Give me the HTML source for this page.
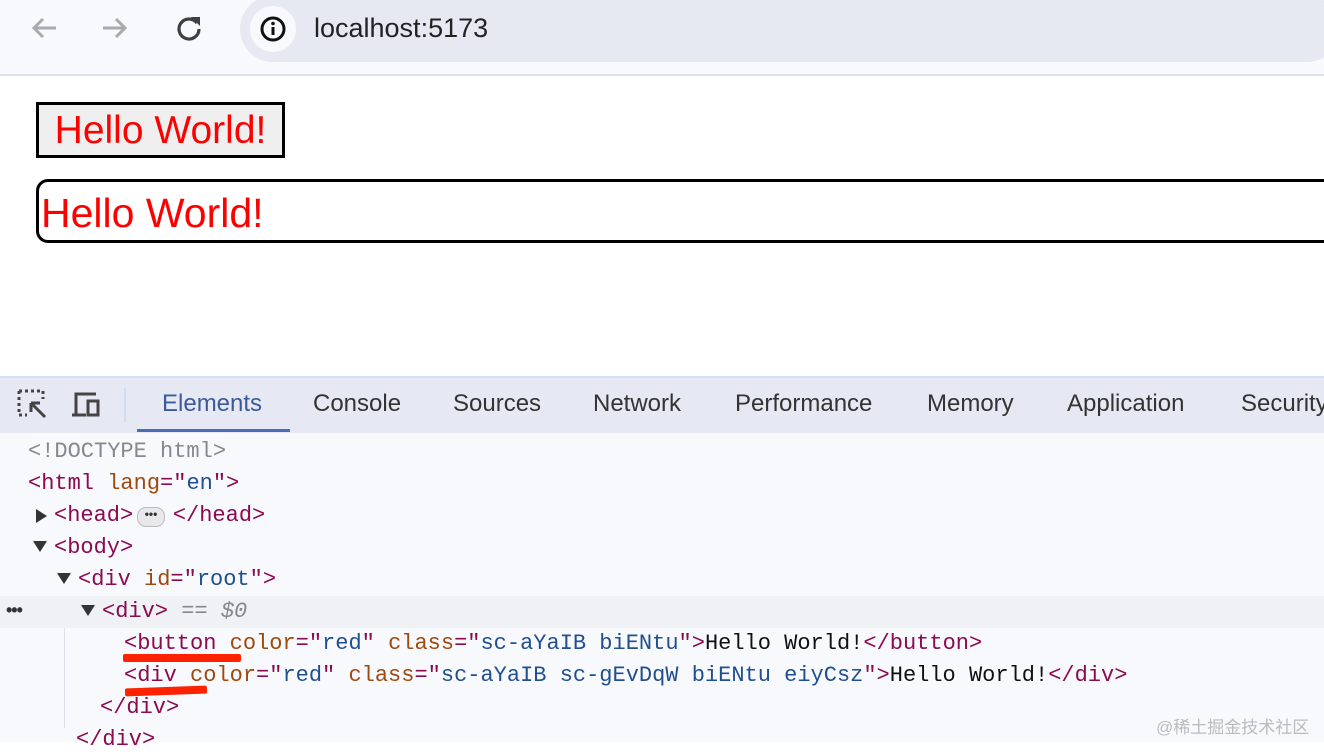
<!DOCTYPE html>
<html><head><style>
body{margin:0;width:1324px;height:742px;overflow:hidden;background:#fff;font-family:"Liberation Sans",sans-serif;position:relative}
.abs{position:absolute}
.top{left:0;top:0;width:1324px;height:74px;background:#f8f9fd;border-bottom:2px solid #dfe1e8}
.url{left:240px;top:-4px;width:1100px;height:66px;background:#e6e9f2;border-radius:33px}
.ic{left:250px;top:6px;width:46px;height:46px;background:#f8f9fd;border-radius:50%}
.urltext{left:314px;top:13px;font-size:27px;color:#222}
.btn1{left:36px;top:102px;width:243px;height:50px;border:3px solid #000;background:#efefef;color:red;font-size:39px;line-height:52px;text-align:center;box-sizing:content-box;white-space:nowrap}
.div2{left:36px;top:179px;width:1320px;height:58px;border:3px solid #000;border-radius:12px;color:red;font-size:41px;line-height:62px;padding-left:2px}
.dt{left:0;top:376px;width:1324px;height:55px;background:#e6e9f3;border-top:2px solid #d3e0f5;border-bottom:2px solid #d3e0f5}
.tab{top:390px;font-size:24px;color:#333}
.panel{left:0;top:433px;width:1324px;height:309px;background:#f8f9fd}
.code{font-family:"Liberation Mono",monospace;font-size:22px;white-space:pre;line-height:32px}
.t{color:#8b0a50}.a{color:#a0490f}.v{color:#1f4f8f}.g{color:#888}.k{color:#111}
</style></head><body>
<div class="abs top"></div>
<svg class="abs" style="left:28px;top:14px" width="34" height="28" viewBox="0 0 34 28"><path d="M28 14H6M15 5l-9 9 9 9" stroke="#a9aaae" stroke-width="3" fill="none"/></svg>
<svg class="abs" style="left:99px;top:14px" width="34" height="28" viewBox="0 0 34 28"><path d="M4 14h22M17 5l9 9-9 9" stroke="#a9aaae" stroke-width="3" fill="none"/></svg>
<svg class="abs" style="left:174px;top:13px" width="30" height="30" viewBox="0 0 30 30"><path d="M23 10A10 10 0 1 0 25 16" stroke="#3c4043" stroke-width="3.2" fill="none"/><path d="M17 4h9v9z" fill="#3c4043"/></svg>
<div class="abs url"></div>
<div class="abs ic"></div>
<svg class="abs" style="left:259px;top:15px" width="28" height="28" viewBox="0 0 28 28"><circle cx="14" cy="14" r="11" stroke="#111" stroke-width="3" fill="none"/><rect x="12.5" y="12" width="3" height="8" fill="#111"/><circle cx="14" cy="8.5" r="1.8" fill="#111"/></svg>
<div class="abs urltext">localhost:5173</div>
<div class="abs btn1">Hello World!</div>
<div class="abs div2">Hello World!</div>
<div class="abs dt"></div>
<svg class="abs" style="left:17px;top:389px" width="32" height="32" viewBox="0 0 32 32"><path d="M2 2h24v8M2 2v24h8" stroke="#444" stroke-width="3" stroke-dasharray="3 3" fill="none"/><path d="M14 14l14 14M14 14h9M14 14v9" stroke="#444" stroke-width="3" fill="none"/></svg>
<svg class="abs" style="left:72px;top:391px" width="34" height="28" viewBox="0 0 34 28"><path d="M4 24V3h20M0 24h14" stroke="#444" stroke-width="3" fill="none"/><rect x="16" y="10" width="10" height="14" stroke="#444" stroke-width="3" fill="none"/></svg>
<div class="abs" style="left:124px;top:388px;width:2px;height:34px;background:#d3dcef"></div>
<div class="abs tab" style="left:162px;color:#3a5a9a">Elements</div>
<div class="abs" style="left:137px;top:429px;width:153px;height:3px;background:#4a6fb0"></div>
<div class="abs tab" style="left:313px">Console</div>
<div class="abs tab" style="left:453px">Sources</div>
<div class="abs tab" style="left:593px">Network</div>
<div class="abs tab" style="left:735px">Performance</div>
<div class="abs tab" style="left:927px">Memory</div>
<div class="abs tab" style="left:1067px">Application</div>
<div class="abs tab" style="left:1241px">Security</div>
<div class="abs panel"></div>
<div class="abs" style="left:0;top:596px;width:1324px;height:32px;background:#eff1f5"></div>
<div class="abs" style="left:64px;top:628px;width:1px;height:100px;background:#dde2ea"></div>
<div class="abs code" style="left:28px;top:436px"><span class="g">&lt;!DOCTYPE html&gt;</span>
<span class="t">&lt;html</span> <span class="a">lang</span><span class="t">="</span><span class="v">en</span><span class="t">"&gt;</span>
</div>
<div class="abs code" style="left:54px;top:500px"><span class="t">&lt;head&gt;</span>   <span class="t">&lt;/head&gt;</span>
<span class="t">&lt;body&gt;</span></div>
<div class="abs" style="left:137px;top:507px;width:26px;height:18px;border:1.5px solid #bbb;border-radius:9px;background:#e8e8ea;font-size:12px;line-height:12px;text-align:center;color:#333;font-weight:bold">•••</div>
<div class="abs" style="left:36px;top:509px;width:0;height:0;border-top:7px solid transparent;border-bottom:7px solid transparent;border-left:11px solid #333"></div>
<div class="abs" style="left:33px;top:541px;border-left:7px solid transparent;border-right:7px solid transparent;border-top:11px solid #333"></div>
<div class="abs" style="left:57px;top:573px;border-left:7px solid transparent;border-right:7px solid transparent;border-top:11px solid #333"></div>
<div class="abs" style="left:81px;top:605px;border-left:7px solid transparent;border-right:7px solid transparent;border-top:11px solid #333"></div>
<div class="abs code" style="left:78px;top:564px"><span class="t">&lt;div</span> <span class="a">id</span><span class="t">="</span><span class="v">root</span><span class="t">"&gt;</span></div>
<div class="abs code" style="left:102px;top:596px"><span class="t">&lt;div&gt;</span> <span class="g">== <i>$0</i></span></div>
<div class="abs" style="left:6px;top:600px;font-size:18px;color:#333;font-weight:bold;letter-spacing:-1px">•••</div>
<div class="abs code" style="left:124px;top:628px"><span class="t">&lt;button</span> <span class="a">color</span><span class="t">="</span><span class="v">red</span><span class="t">"</span> <span class="a">class</span><span class="t">="</span><span class="v">sc-aYaIB biENtu</span><span class="t">"&gt;</span><span class="k">Hello World!</span><span class="t">&lt;/button&gt;</span>
<span class="t">&lt;div</span> <span class="a">color</span><span class="t">="</span><span class="v">red</span><span class="t">"</span> <span class="a">class</span><span class="t">="</span><span class="v">sc-aYaIB sc-gEvDqW biENtu eiyCsz</span><span class="t">"&gt;</span><span class="k">Hello World!</span><span class="t">&lt;/div&gt;</span></div>
<div class="abs code" style="left:100px;top:692px"><span class="t">&lt;/div&gt;</span></div>
<div class="abs code" style="left:76px;top:724px"><span class="t">&lt;/div&gt;</span></div>
<div class="abs" style="left:123px;top:654px;width:118px;height:8px;background:#ff2200;border-radius:2px"></div>
<div class="abs" style="left:125px;top:687px;width:82px;height:8px;background:#ff2200;transform:rotate(-2deg);border-radius:2px"></div>
<div class="abs" style="left:1156px;top:713px;font-size:17px;color:#bbb;font-family:'Liberation Sans','Noto Sans CJK SC',sans-serif">@稀土掘金技术社区</div>
</body></html>
